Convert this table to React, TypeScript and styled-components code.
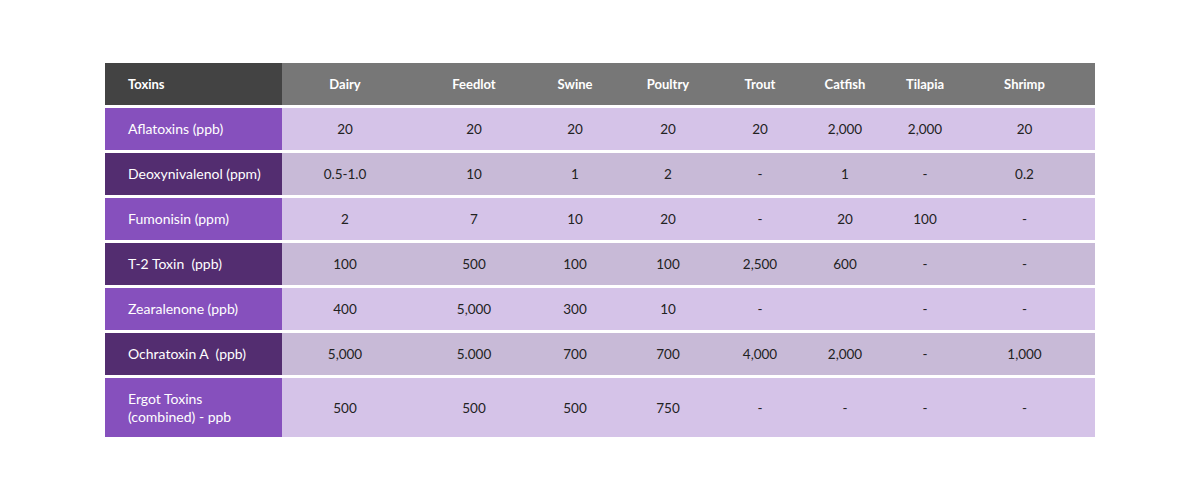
import styled, { createGlobalStyle } from 'styled-components';

const GlobalStyle = createGlobalStyle`
  body {
    margin: 0;
    background: #ffffff;
    font-family: Lato, "Open Sans", "Liberation Sans", sans-serif;
  }
`;

const COLUMNS = '177px 126px 132px 70px 116px 68px 102px 58px 141px';

const SPECIES = ['Dairy', 'Feedlot', 'Swine', 'Poultry', 'Trout', 'Catfish', 'Tilapia', 'Shrimp'];

const ROWS: { toxin: string[]; values: string[] }[] = [
  { toxin: ['Aflatoxins (ppb)'], values: ['20', '20', '20', '20', '20', '2,000', '2,000', '20'] },
  { toxin: ['Deoxynivalenol (ppm)'], values: ['0.5-1.0', '10', '1', '2', '-', '1', '-', '0.2'] },
  { toxin: ['Fumonisin (ppm)'], values: ['2', '7', '10', '20', '-', '20', '100', '-'] },
  { toxin: ['T-2 Toxin\u00a0\u00a0(ppb)'], values: ['100', '500', '100', '100', '2,500', '600', '-', '-'] },
  { toxin: ['Zearalenone (ppb)'], values: ['400', '5,000', '300', '10', '-', '', '-', '-'] },
  { toxin: ['Ochratoxin A\u00a0\u00a0(ppb)'], values: ['5,000', '5.000', '700', '700', '4,000', '2,000', '-', '1,000'] },
  { toxin: ['Ergot Toxins', '(combined) - ppb'], values: ['500', '500', '500', '750', '-', '-', '-', '-'] },
];

const Page = styled.div`
  padding: 63px 0 0 105px;
`;

const Table = styled.div`
  width: 990px;
  display: flex;
  flex-direction: column;
  gap: 3px;
`;

const Row = styled.div<{ $tall?: boolean }>`
  display: grid;
  grid-template-columns: ${COLUMNS};
  height: ${({ $tall }) => ($tall ? '59px' : '42px')};
`;

const HeadLabel = styled.div`
  background: #434343;
  color: #ffffff;
  font-size: 13px;
  font-weight: 700;
  display: flex;
  align-items: center;
  padding-left: 23px;
`;

const HeadCell = styled.div`
  background: #777777;
  color: #ffffff;
  font-size: 13px;
  font-weight: 700;
  display: flex;
  align-items: center;
  justify-content: center;
`;

const ToxinCell = styled.div<{ $dark: boolean }>`
  background: ${({ $dark }) => ($dark ? '#532d70' : '#8650bd')};
  color: #ffffff;
  font-size: 14px;
  line-height: 18px;
  display: flex;
  flex-direction: column;
  justify-content: center;
  padding-left: 23px;
`;

const ValueCell = styled.div<{ $dark: boolean }>`
  background: ${({ $dark }) => ($dark ? '#c8bad7' : '#d5c3e8')};
  color: #222222;
  font-size: 13.5px;
  display: flex;
  align-items: center;
  justify-content: center;
`;

export default function App() {
  return (
    <Page>
      <GlobalStyle />
      <Table>
        <Row>
          <HeadLabel>Toxins</HeadLabel>
          {SPECIES.map((s) => (
            <HeadCell key={s}>{s}</HeadCell>
          ))}
        </Row>
        {ROWS.map((row, i) => (
          <Row key={row.toxin[0]} $tall={row.toxin.length > 1}>
            <ToxinCell $dark={i % 2 === 1}>
              {row.toxin.map((line) => (
                <span key={line}>{line}</span>
              ))}
            </ToxinCell>
            {row.values.map((v, j) => (
              <ValueCell key={j} $dark={i % 2 === 1}>{v}</ValueCell>
            ))}
          </Row>
        ))}
      </Table>
    </Page>
  );
}
